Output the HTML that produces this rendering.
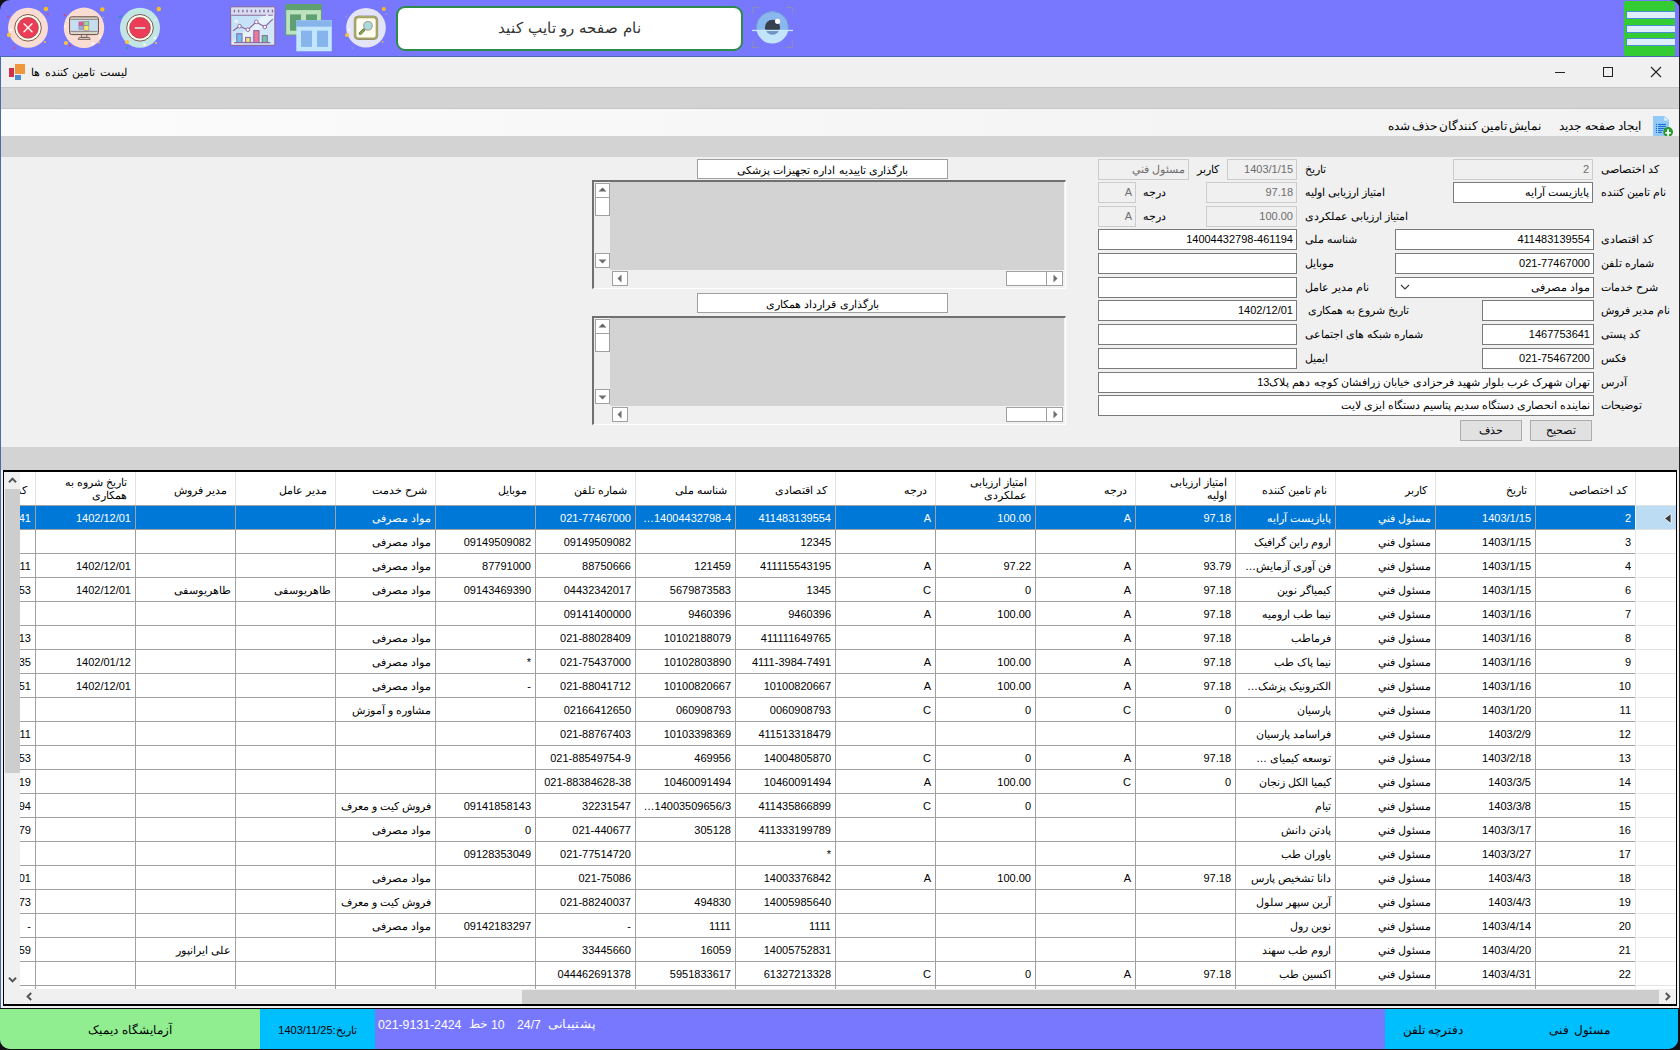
<!DOCTYPE html><html><head><meta charset="utf-8"><style>
*{box-sizing:border-box;margin:0;padding:0}
html,body{width:1680px;height:1050px;overflow:hidden;background:#7878FF;font-family:"Liberation Sans",sans-serif;font-size:11px;color:#000}
.a{position:absolute}
.t{position:absolute;white-space:nowrap;line-height:1}
.box{position:absolute;background:#fff;border:1px solid #7A7A7A;height:21px;direction:rtl;text-align:right;padding:0 3px 0 0;line-height:19px;font-size:11px;white-space:nowrap;overflow:hidden}
.dis{background:#F0F0F0;border-color:#CCCCCC;color:#6D6D6D}
.lbl{position:absolute;direction:rtl;text-align:left;white-space:nowrap;font-size:11px;line-height:14px}
.btn{position:absolute;background:#E1E1E1;border:1px solid #ADADAD;text-align:center;font-size:11px;line-height:19px}
.g{position:absolute;overflow:hidden}
.cell{position:absolute;direction:rtl;text-align:right;white-space:nowrap;font-size:11px;line-height:14px}
</style></head><body>
<div class="a" style="left:0;top:0;width:1680px;height:56px;background:#7878FF"></div>
<svg class="a" style="left:0;top:0" width="14" height="14" viewBox="0 0 14 14"><path d="M0 0 H10 A10 10 0 0 0 0 10 Z" fill="#111"/></svg>
<svg class="a" style="left:0;top:0" width="170" height="56" viewBox="0 0 170 56"><circle cx="28" cy="27.8" r="20" fill="#FADDD2"/><circle cx="28" cy="27.8" r="13.3" fill="#FFFBEA" stroke="#6A4A44" stroke-width="0.9"/><circle cx="28" cy="27.8" r="10.5" fill="#EC3C58" stroke="#6A4A44" stroke-width="0.5"/><path d="M24 23.8 L32 31.8 M32 23.8 L24 31.8" stroke="#FFFBEA" stroke-width="1.5" stroke-linecap="round"/><circle cx="45.9" cy="8.9" r="2.2" fill="#F8BE20"/><circle cx="48" cy="13.9" r="1" fill="#EC3C58"/><circle cx="8" cy="16.6" r="1" fill="#EC3C58"/><circle cx="10.9" cy="29.7" r="1.2" fill="#fff"/><circle cx="9" cy="34.9" r="2.1" fill="#F8C440"/><circle cx="12.4" cy="37.3" r="0.7" fill="#F8C440"/><circle cx="44.8" cy="42" r="1" fill="#F8C440"/><circle cx="14.4" cy="48" r="1" fill="#EC3C58"/><circle cx="44.3" cy="19.4" r="0.7" fill="#fff"/><circle cx="84" cy="27.8" r="20.2" fill="#FADDD2"/><rect x="69.6" y="16.8" width="28.8" height="17.8" rx="2" fill="#D8D4C8" stroke="#6A4A44" stroke-width="1"/><rect x="70.4" y="19.4" width="27.2" height="12" fill="#C6DEF2"/><path d="M70.4 19.4 H97.6 M70.4 31.4 H97.6" stroke="#6A4A44" stroke-width="0.6"/><rect x="81.5" y="34.6" width="5.4" height="2.8" fill="#D8D4C8" stroke="#6A4A44" stroke-width="0.7"/><path d="M78.2 39.4 L79.2 37.4 H89.2 L90.2 39.4 Z" fill="#D8D4C8" stroke="#6A4A44" stroke-width="0.8"/><g stroke="#7A6070" stroke-width="0.4"><rect x="78.9" y="21.9" width="4.6" height="3.6" fill="#E85090"/><rect x="83.9" y="21.6" width="5" height="3.9" fill="#98D898"/><rect x="78.9" y="25.8" width="4.6" height="3.6" fill="#A8A8D8"/><rect x="83.9" y="25.8" width="5" height="4.4" fill="#F8E868"/></g><circle cx="102.3" cy="9.4" r="2.2" fill="#F8BE20"/><circle cx="64.5" cy="15" r="1" fill="#EC3C58"/><circle cx="103.5" cy="17.6" r="0.6" fill="#F8BE20"/><circle cx="66" cy="43" r="2.1" fill="#F8C440"/><circle cx="70" cy="45.8" r="1" fill="#EC3C58"/><circle cx="100" cy="36.6" r="1.2" fill="#fff"/><circle cx="92.8" cy="43.5" r="1.3" fill="#fff"/><circle cx="99" cy="42.6" r="1" fill="#F8C440"/><circle cx="65.5" cy="26.5" r="0.8" fill="#fff"/><circle cx="140" cy="27.8" r="20" fill="#C2E6E4"/><circle cx="140" cy="27.8" r="13.3" fill="#FFFBEA" stroke="#6A4A44" stroke-width="0.9"/><circle cx="140" cy="27.8" r="10.5" fill="#EC3C58" stroke="#6A4A44" stroke-width="0.5"/><rect x="134.8" y="27" width="10.4" height="2" fill="#C8D2C8"/><circle cx="158.8" cy="9" r="2.2" fill="#F8BE20"/><circle cx="120" cy="16.7" r="1" fill="#10A090"/><circle cx="127.5" cy="48" r="1" fill="#10A090"/><circle cx="127" cy="42" r="2.1" fill="#F8C440"/><circle cx="156" cy="43" r="1" fill="#F8C440"/><circle cx="144.5" cy="44.5" r="1.3" fill="#fff"/><circle cx="155" cy="38" r="1.2" fill="#fff"/><circle cx="158.7" cy="17.5" r="0.6" fill="#C09080"/><circle cx="155.5" cy="19.5" r="0.7" fill="#fff"/></svg>
<svg class="a" style="left:225px;top:2px" width="55" height="48" viewBox="225 2 55 48"><defs><linearGradient id="cg" x1="0" y1="0" x2="1" y2="1"><stop offset="0" stop-color="#C6E2F8"/><stop offset="0.45" stop-color="#C6E2F8"/><stop offset="0.5" stop-color="#E6F2FC"/><stop offset="0.6" stop-color="#E6F2FC"/><stop offset="0.65" stop-color="#D2E8FA"/><stop offset="1" stop-color="#D2E8FA"/></linearGradient></defs><rect x="230.6" y="6.9" width="44.3" height="38.4" rx="1" fill="url(#cg)" stroke="#8E6BA0" stroke-width="1.3"/><rect x="231.3" y="7.6" width="43" height="7.5" fill="#D6DEF0"/><ellipse cx="234.40" cy="11" rx="0.8" ry="1.6" fill="#8E6BA0"/><ellipse cx="238.63" cy="11" rx="0.8" ry="1.6" fill="#8E6BA0"/><ellipse cx="242.86" cy="11" rx="0.8" ry="1.6" fill="#8E6BA0"/><ellipse cx="247.09" cy="11" rx="0.8" ry="1.6" fill="#8E6BA0"/><ellipse cx="251.32" cy="11" rx="0.8" ry="1.6" fill="#8E6BA0"/><ellipse cx="255.55" cy="11" rx="0.8" ry="1.6" fill="#8E6BA0"/><ellipse cx="259.78" cy="11" rx="0.8" ry="1.6" fill="#8E6BA0"/><ellipse cx="264.01" cy="11" rx="0.8" ry="1.6" fill="#8E6BA0"/><ellipse cx="268.24" cy="11" rx="0.8" ry="1.6" fill="#8E6BA0"/><ellipse cx="272.47" cy="11" rx="0.8" ry="1.6" fill="#8E6BA0"/><path d="M231.3 15.3 H266 M268.2 15.3 H272.8" stroke="#8E6BA0" stroke-width="1.1"/><path d="M233.5 30.6 L239.5 26.2 L247.9 29.7 L256.3 21.9 L264.8 27 L272.5 19.4" fill="none" stroke="#8E6BA0" stroke-width="1.2" stroke-linecap="round"/><g fill="#fff" stroke="#8E6BA0" stroke-width="1"><circle cx="239.5" cy="26.2" r="1.8"/><circle cx="247.9" cy="29.7" r="1.8"/><circle cx="256.3" cy="21.9" r="1.8"/><circle cx="264.8" cy="27" r="1.8"/></g><path d="M235.6 20.6 l0.7 -1.6 l0.7 1.6 l1.6 0.7 l-1.6 0.7 l-0.7 1.6 l-0.7 -1.6 l-1.6 -0.7 Z" fill="#FFF6F6"/><g stroke="#8E6BA0" stroke-width="1.1"><rect x="236.8" y="33.8" width="5.2" height="8.6" fill="#6CC4F4"/><rect x="245.6" y="37.5" width="4.6" height="4.9" fill="#F8E27A"/><rect x="253.8" y="30.6" width="5.2" height="11.8" fill="#F07898"/><rect x="262.3" y="35.6" width="5" height="6.8" fill="#6ACCA4"/></g><path d="M234.6 42.6 H269.8" stroke="#8E6BA0" stroke-width="1.2" stroke-linecap="round"/></svg>
<svg class="a" style="left:284px;top:4px" width="50" height="48" viewBox="0 0 50 48"><rect x="1.2" y="0" width="36.7" height="31.5" fill="#5FA072"/><rect x="2.2" y="6.1" width="34.7" height="24.4" fill="#BCE2BE"/><rect x="6" y="10.4" width="11" height="16.3" fill="#5FA072"/><rect x="22" y="10.4" width="11" height="16.3" fill="#5FA072"/><rect x="12.3" y="16.3" width="35.5" height="31" fill="#C2E6FC"/><rect x="12.3" y="16.3" width="35.5" height="6.4" fill="#88B4EC"/><rect x="17" y="26.7" width="11" height="16.2" fill="#88B4EC"/><rect x="33" y="26.7" width="11" height="16.2" fill="#88B4EC"/></svg>
<svg class="a" style="left:340px;top:2px" width="55" height="52" viewBox="340 2 55 52"><circle cx="366" cy="27.7" r="19.8" fill="#E4E4F8"/><rect x="354.3" y="16.1" width="23.4" height="23.4" rx="3.8" fill="#FFFDF0" stroke="#7E6C62" stroke-width="0.8"/><rect x="355.4" y="17.2" width="21.2" height="21.2" rx="3" fill="none" stroke="#A3A55C" stroke-width="1.9"/><line x1="360.2" y1="33.6" x2="364" y2="29.8" stroke="#5E5040" stroke-width="2.8" stroke-linecap="round"/><line x1="360.2" y1="33.6" x2="364" y2="29.8" stroke="#7CB848" stroke-width="1.6" stroke-linecap="round"/><circle cx="368" cy="25.8" r="4.3" fill="#A6DCDE" stroke="#A89C96" stroke-width="1.1"/><circle cx="383.8" cy="8.9" r="2" fill="#F8BE20"/><circle cx="347" cy="35" r="2" fill="#F8C040"/><circle cx="382.7" cy="41.8" r="0.9" fill="#F8BE20"/><circle cx="346" cy="16.5" r="0.8" fill="#A0A0D8"/><circle cx="349" cy="29.7" r="1" fill="#fff"/><circle cx="352.4" cy="48" r="0.8" fill="#A0A0D8"/><circle cx="386" cy="14" r="0.8" fill="#A0A0D8"/></svg>
<div class="a" style="left:396px;top:6px;width:347px;height:45px;background:#fff;border:2px solid #2B8C4C;border-radius:9px"></div>
<div class="t" style="left:396px;top:20px;width:347px;text-align:center;direction:rtl;font-size:15px;word-spacing:0.5px;color:#333">نام صفحه رو تایپ کنید</div>
<svg class="a" style="left:745px;top:0" width="56" height="56" viewBox="745 0 56 56"><defs><clipPath id="eyetop"><rect x="745" y="0" width="56" height="30.4"/></clipPath></defs><path d="M752.6 14 V7.5 H759 M786 7.5 H792.4 V14 M752.6 41 V47.5 H759 M786 47.5 H792.4 V41" fill="none" stroke="#8C8CB4" stroke-width="1.1"/><circle cx="772.4" cy="27.5" r="16" fill="#C2E5FC"/><g clip-path="url(#eyetop)"><circle cx="772.4" cy="27.5" r="16" fill="#8AB8EE" stroke="#6088BC" stroke-width="0.6"/></g><circle cx="772.5" cy="27.3" r="7.5" fill="#6E92C2"/><g clip-path="url(#eyetop)"><circle cx="772.5" cy="27.3" r="7.5" fill="#374150"/></g><circle cx="777.6" cy="21.3" r="2.6" fill="#fff"/><rect x="752" y="29.8" width="41" height="1.3" fill="#C8E8FC"/></svg>
<div class="a" style="left:1624px;top:1px;width:51px;height:55px;background:#33CC33;border-radius:2px"></div>
<div class="a" style="left:1626px;top:11px;width:49px;height:8px;background:#DDEEFF;border:1px solid #4A8ED0;border-right:none"></div>
<div class="a" style="left:1626px;top:25px;width:49px;height:8px;background:#DDEEFF;border:1px solid #4A8ED0;border-right:none"></div>
<div class="a" style="left:1626px;top:38px;width:49px;height:8px;background:#DDEEFF;border:1px solid #4A8ED0;border-right:none"></div>
<div class="a" style="left:1679px;top:0;width:1px;height:1050px;background:#222"></div>
<svg class="a" style="left:1666px;top:0" width="14" height="14" viewBox="0 0 14 14"><path d="M4 0 H14 V10 A10 10 0 0 0 4 0 Z" fill="#111"/></svg>
<div class="a" style="left:0;top:56px;width:1679px;height:952px;background:#F0F0F0"></div>
<div class="a" style="left:0;top:56px;width:1679px;height:1px;background:#4A6AAE"></div>
<div class="a" style="left:0;top:56px;width:1px;height:952px;background:#4A6AAE"></div>
<div class="a" style="left:1px;top:57px;width:1678px;height:30px;background:#F0F0F0"></div>
<div class="a" style="left:9px;top:68px;width:5px;height:9px;background:#D0304A"></div><div class="a" style="left:15px;top:64px;width:10px;height:10px;background:#F0963C"></div><div class="a" style="left:15px;top:75px;width:6px;height:5px;background:#4A8ED0"></div>
<div class="t" style="left:30px;top:67px;width:97px;text-align:right;direction:rtl;font-size:11px;word-spacing:1.6px;color:#000">لیست تامین کننده ها</div>
<div class="a" style="left:1555px;top:72px;width:10px;height:1px;background:#222"></div>
<div class="a" style="left:1603px;top:67px;width:10px;height:10px;border:1px solid #222"></div>
<svg class="a" style="left:1650px;top:66px" width="12" height="12" viewBox="0 0 12 12"><path d="M1 1 L11 11 M11 1 L1 11" stroke="#222" stroke-width="1.1"/></svg>
<div class="a" style="left:1px;top:87px;width:1678px;height:22px;background:#D3D3D3;border-top:1px solid #C6C6C6;border-bottom:1px solid #C6C6C6"></div>
<div class="a" style="left:1px;top:109px;width:1678px;height:27px;background:linear-gradient(90deg,#FBFBFB,#F2F2F2)"></div>
<div class="a" style="left:1px;top:136px;width:1678px;height:21px;background:#D3D3D3"></div>
<svg class="a" style="left:1648px;top:110px" width="28" height="26" viewBox="1648 110 28 26"><path d="M1653 115.9 H1664.6 L1669 120.3 V136 H1653 Z" fill="#94CAF8"/><path d="M1664.3 116.8 L1668 120.6 H1664.3 Z" fill="#E6F6FE"/><g fill="#1A6ED0"><rect x="1655.9" y="123.9" width="1.1" height="1.1"/><rect x="1655.9" y="125.9" width="1.1" height="1.1"/><rect x="1655.9" y="127.9" width="1.1" height="1.1"/><rect x="1655.9" y="129.9" width="1.1" height="1.1"/><rect x="1655.9" y="131.9" width="1.1" height="1.1"/><rect x="1658.1" y="123.9" width="7.8" height="1.1"/><rect x="1658.1" y="125.9" width="7.8" height="1.1"/><rect x="1658.1" y="127.9" width="6.7" height="1.1"/><rect x="1658.1" y="129.9" width="4.7" height="1.1"/><rect x="1658.1" y="131.9" width="3.8" height="1.1"/></g><circle cx="1668.1" cy="132" r="4.9" fill="#2A9A32"/><path d="M1668.1 129.3 V136 M1665.4 132.8 H1670.8" stroke="#fff" stroke-width="1.7"/></svg>
<div class="t" style="left:1540px;top:120px;width:101px;text-align:right;direction:rtl;font-size:12px">ایجاد صفحه جدید</div>
<div class="t" style="left:1340px;top:120px;width:201px;text-align:right;direction:rtl;font-size:12px;word-spacing:-1px">نمایش تامین کنندگان حذف شده</div>
<div class="a" style="left:1px;top:157px;width:1678px;height:290px;background:#F0F0F0"></div>
<div class="a" style="left:1px;top:447px;width:1678px;height:23px;background:#D3D3D3"></div>
<div class="lbl" style="left:1601px;top:162px">کد اختصاصی</div>
<div class="box dis" style="left:1453px;top:159px;width:140px;">2</div>
<div class="lbl" style="left:1601px;top:185px">نام تامین کننده</div>
<div class="box" style="left:1453px;top:182px;width:140px;">پایازیست آرایه</div>
<div class="lbl" style="left:1601px;top:232px">کد اقتصادی</div>
<div class="box" style="left:1395px;top:229px;width:199px;">411483139554</div>
<div class="lbl" style="left:1601px;top:256px">شماره تلفن</div>
<div class="box" style="left:1395px;top:253px;width:199px;">021-77467000</div>
<div class="lbl" style="left:1601px;top:280px">شرح خدمات</div>
<div class="box" style="left:1395px;top:277px;width:199px;">مواد مصرفی</div>
<svg class="a" style="left:1400px;top:284px" width="10" height="7" viewBox="0 0 10 7"><path d="M1 1 L5 5 L9 1" fill="none" stroke="#333" stroke-width="1.1"/></svg>
<div class="lbl" style="left:1601px;top:303px">نام مدیر فروش</div>
<div class="box" style="left:1482px;top:300px;width:112px;"></div>
<div class="lbl" style="left:1601px;top:327px">کد پستی</div>
<div class="box" style="left:1482px;top:324px;width:112px;">1467753641</div>
<div class="lbl" style="left:1601px;top:351px">فکس</div>
<div class="box" style="left:1482px;top:348px;width:112px;">021-75467200</div>
<div class="lbl" style="left:1601px;top:375px">آدرس</div>
<div class="box" style="left:1098px;top:372px;width:496px;">تهران شهرک غرب بلوار شهید فرحزادی خیابان زرافشان کوچه دهم پلاک13</div>
<div class="lbl" style="left:1601px;top:398px">توضیحات</div>
<div class="box" style="left:1098px;top:395px;width:496px;">نماینده انحصاری دستگاه سدیم پتاسیم دستگاه ایزی لایت</div>
<div class="btn" style="left:1530px;top:420px;width:62px;height:21px">تصحیح</div>
<div class="btn" style="left:1460px;top:420px;width:62px;height:21px">حذف</div>
<div class="lbl" style="left:1305px;top:162px">تاریخ</div>
<div class="box dis" style="left:1227px;top:159px;width:70px;">1403/1/15</div>
<div class="lbl" style="left:1197px;top:162px">کاربر</div>
<div class="box dis" style="left:1098px;top:159px;width:91px;">مسئول فني</div>
<div class="lbl" style="left:1305px;top:185px">امتیاز ارزیابی اولیه</div>
<div class="box dis" style="left:1206px;top:182px;width:91px;">97.18</div>
<div class="lbl" style="left:1143px;top:185px">درجه</div>
<div class="box dis" style="left:1098px;top:182px;width:38px;">A</div>
<div class="lbl" style="left:1305px;top:209px">امتیاز ارزیابی عملکردی</div>
<div class="box dis" style="left:1206px;top:206px;width:91px;">100.00</div>
<div class="lbl" style="left:1143px;top:209px">درجه</div>
<div class="box dis" style="left:1098px;top:206px;width:38px;">A</div>
<div class="lbl" style="left:1305px;top:232px">شناسه ملی</div>
<div class="box" style="left:1098px;top:229px;width:199px;">14004432798-461194</div>
<div class="lbl" style="left:1305px;top:256px">موبایل</div>
<div class="box" style="left:1098px;top:253px;width:199px;"></div>
<div class="lbl" style="left:1305px;top:280px">نام مدیر عامل</div>
<div class="box" style="left:1098px;top:277px;width:199px;"></div>
<div class="lbl" style="left:1308px;top:303px">تاریخ شروع به همکاری</div>
<div class="box" style="left:1098px;top:300px;width:199px;">1402/12/01</div>
<div class="lbl" style="left:1305px;top:327px">شماره شبکه های اجتماعی</div>
<div class="box" style="left:1098px;top:324px;width:199px;"></div>
<div class="lbl" style="left:1305px;top:351px">ایمیل</div>
<div class="box" style="left:1098px;top:348px;width:199px;"></div>
<div class="a" style="left:697px;top:159px;width:251px;height:20px;background:#fff;border:1px solid #A0A0A0"></div>
<div class="t" style="left:697px;top:165px;width:251px;text-align:center;direction:rtl;font-size:11px">بارگذاری تاییدیه اداره تجهیزات پزشکی</div>
<div class="a" style="left:592px;top:180px;width:474px;height:109px;background:#F0F0F0;border-top:2px solid #707070;border-left:2px solid #707070;border-right:1px solid #fff;border-bottom:1px solid #fff"></div>
<div class="a" style="left:610px;top:182px;width:454px;height:88px;background:#D3D3D3"></div>
<div class="a" style="left:595px;top:183px;width:15px;height:15px;background:#fff;border:1px solid #A0A0A0"></div>
<svg class="a" style="left:598px;top:187px" width="9" height="5"><path d="M0.5 4.5 L4.5 0.5 L8.5 4.5 Z" fill="#666"/></svg>
<div class="a" style="left:595px;top:197px;width:15px;height:19px;background:#fff;border:1px solid #A0A0A0"></div>
<div class="a" style="left:595px;top:253px;width:15px;height:15px;background:#fff;border:1px solid #A0A0A0"></div>
<svg class="a" style="left:598px;top:259px" width="9" height="5"><path d="M0.5 0.5 L4.5 4.5 L8.5 0.5 Z" fill="#6E6E6E"/></svg>
<div class="a" style="left:612px;top:271px;width:16px;height:15px;background:#fff;border:1px solid #A0A0A0"></div>
<svg class="a" style="left:617px;top:274px" width="5" height="9"><path d="M4.5 0.5 L0.5 4.5 L4.5 8.5 Z" fill="#6E6E6E"/></svg>
<div class="a" style="left:1006px;top:271px;width:41px;height:15px;background:#fff;border:1px solid #A0A0A0"></div>
<div class="a" style="left:1046px;top:271px;width:17px;height:15px;background:#fff;border:1px solid #A0A0A0"></div>
<svg class="a" style="left:1053px;top:274px" width="5" height="9"><path d="M0.5 0.5 L4.5 4.5 L0.5 8.5 Z" fill="#6E6E6E"/></svg>
<div class="a" style="left:697px;top:293px;width:251px;height:20px;background:#fff;border:1px solid #A0A0A0"></div>
<div class="t" style="left:697px;top:299px;width:251px;text-align:center;direction:rtl;font-size:11px">بارگذاری قرارداد همکاری</div>
<div class="a" style="left:592px;top:316px;width:474px;height:109px;background:#F0F0F0;border-top:2px solid #707070;border-left:2px solid #707070;border-right:1px solid #fff;border-bottom:1px solid #fff"></div>
<div class="a" style="left:610px;top:318px;width:454px;height:88px;background:#D3D3D3"></div>
<div class="a" style="left:595px;top:319px;width:15px;height:15px;background:#fff;border:1px solid #A0A0A0"></div>
<svg class="a" style="left:598px;top:323px" width="9" height="5"><path d="M0.5 4.5 L4.5 0.5 L8.5 4.5 Z" fill="#666"/></svg>
<div class="a" style="left:595px;top:333px;width:15px;height:19px;background:#fff;border:1px solid #A0A0A0"></div>
<div class="a" style="left:595px;top:389px;width:15px;height:15px;background:#fff;border:1px solid #A0A0A0"></div>
<svg class="a" style="left:598px;top:395px" width="9" height="5"><path d="M0.5 0.5 L4.5 4.5 L8.5 0.5 Z" fill="#6E6E6E"/></svg>
<div class="a" style="left:612px;top:407px;width:16px;height:15px;background:#fff;border:1px solid #A0A0A0"></div>
<svg class="a" style="left:617px;top:410px" width="5" height="9"><path d="M4.5 0.5 L0.5 4.5 L4.5 8.5 Z" fill="#6E6E6E"/></svg>
<div class="a" style="left:1006px;top:407px;width:41px;height:15px;background:#fff;border:1px solid #A0A0A0"></div>
<div class="a" style="left:1046px;top:407px;width:17px;height:15px;background:#fff;border:1px solid #A0A0A0"></div>
<svg class="a" style="left:1053px;top:410px" width="5" height="9"><path d="M0.5 0.5 L4.5 4.5 L0.5 8.5 Z" fill="#6E6E6E"/></svg>
<div class="a" style="left:3px;top:470px;width:1674px;height:536px;background:#fff;border:1px solid #000;border-width:2px 1px 2px 1px"></div>
<div class="g" style="left:20px;top:472px;width:1656px;height:517px">
<div class="a" style="left:0px;top:33px;width:1616px;height:1px;background:#A0A0A0"></div>
<div class="a" style="left:1616px;top:33px;width:40px;height:1px;background:#E3E3E3"></div>
<div class="a" style="left:0px;top:57px;width:1616px;height:1px;background:#A0A0A0"></div>
<div class="a" style="left:1616px;top:57px;width:40px;height:1px;background:#E3E3E3"></div>
<div class="a" style="left:0px;top:81px;width:1616px;height:1px;background:#A0A0A0"></div>
<div class="a" style="left:1616px;top:81px;width:40px;height:1px;background:#E3E3E3"></div>
<div class="a" style="left:0px;top:105px;width:1616px;height:1px;background:#A0A0A0"></div>
<div class="a" style="left:1616px;top:105px;width:40px;height:1px;background:#E3E3E3"></div>
<div class="a" style="left:0px;top:129px;width:1616px;height:1px;background:#A0A0A0"></div>
<div class="a" style="left:1616px;top:129px;width:40px;height:1px;background:#E3E3E3"></div>
<div class="a" style="left:0px;top:153px;width:1616px;height:1px;background:#A0A0A0"></div>
<div class="a" style="left:1616px;top:153px;width:40px;height:1px;background:#E3E3E3"></div>
<div class="a" style="left:0px;top:177px;width:1616px;height:1px;background:#A0A0A0"></div>
<div class="a" style="left:1616px;top:177px;width:40px;height:1px;background:#E3E3E3"></div>
<div class="a" style="left:0px;top:201px;width:1616px;height:1px;background:#A0A0A0"></div>
<div class="a" style="left:1616px;top:201px;width:40px;height:1px;background:#E3E3E3"></div>
<div class="a" style="left:0px;top:225px;width:1616px;height:1px;background:#A0A0A0"></div>
<div class="a" style="left:1616px;top:225px;width:40px;height:1px;background:#E3E3E3"></div>
<div class="a" style="left:0px;top:249px;width:1616px;height:1px;background:#A0A0A0"></div>
<div class="a" style="left:1616px;top:249px;width:40px;height:1px;background:#E3E3E3"></div>
<div class="a" style="left:0px;top:273px;width:1616px;height:1px;background:#A0A0A0"></div>
<div class="a" style="left:1616px;top:273px;width:40px;height:1px;background:#E3E3E3"></div>
<div class="a" style="left:0px;top:297px;width:1616px;height:1px;background:#A0A0A0"></div>
<div class="a" style="left:1616px;top:297px;width:40px;height:1px;background:#E3E3E3"></div>
<div class="a" style="left:0px;top:321px;width:1616px;height:1px;background:#A0A0A0"></div>
<div class="a" style="left:1616px;top:321px;width:40px;height:1px;background:#E3E3E3"></div>
<div class="a" style="left:0px;top:345px;width:1616px;height:1px;background:#A0A0A0"></div>
<div class="a" style="left:1616px;top:345px;width:40px;height:1px;background:#E3E3E3"></div>
<div class="a" style="left:0px;top:369px;width:1616px;height:1px;background:#A0A0A0"></div>
<div class="a" style="left:1616px;top:369px;width:40px;height:1px;background:#E3E3E3"></div>
<div class="a" style="left:0px;top:393px;width:1616px;height:1px;background:#A0A0A0"></div>
<div class="a" style="left:1616px;top:393px;width:40px;height:1px;background:#E3E3E3"></div>
<div class="a" style="left:0px;top:417px;width:1616px;height:1px;background:#A0A0A0"></div>
<div class="a" style="left:1616px;top:417px;width:40px;height:1px;background:#E3E3E3"></div>
<div class="a" style="left:0px;top:441px;width:1616px;height:1px;background:#A0A0A0"></div>
<div class="a" style="left:1616px;top:441px;width:40px;height:1px;background:#E3E3E3"></div>
<div class="a" style="left:0px;top:465px;width:1616px;height:1px;background:#A0A0A0"></div>
<div class="a" style="left:1616px;top:465px;width:40px;height:1px;background:#E3E3E3"></div>
<div class="a" style="left:0px;top:489px;width:1616px;height:1px;background:#A0A0A0"></div>
<div class="a" style="left:1616px;top:489px;width:40px;height:1px;background:#E3E3E3"></div>
<div class="a" style="left:0px;top:513px;width:1616px;height:1px;background:#A0A0A0"></div>
<div class="a" style="left:1616px;top:513px;width:40px;height:1px;background:#E3E3E3"></div>
<div class="a" style="left:1615px;top:33px;width:1px;height:484px;background:#E8E8E8"></div>
<div class="a" style="left:1615px;top:0px;width:1px;height:33px;background:#E3E3E3"></div>
<div class="a" style="left:1515px;top:33px;width:1px;height:484px;background:#A0A0A0"></div>
<div class="a" style="left:1515px;top:0px;width:1px;height:33px;background:#E3E3E3"></div>
<div class="a" style="left:1415px;top:33px;width:1px;height:484px;background:#A0A0A0"></div>
<div class="a" style="left:1415px;top:0px;width:1px;height:33px;background:#E3E3E3"></div>
<div class="a" style="left:1315px;top:33px;width:1px;height:484px;background:#A0A0A0"></div>
<div class="a" style="left:1315px;top:0px;width:1px;height:33px;background:#E3E3E3"></div>
<div class="a" style="left:1215px;top:33px;width:1px;height:484px;background:#A0A0A0"></div>
<div class="a" style="left:1215px;top:0px;width:1px;height:33px;background:#E3E3E3"></div>
<div class="a" style="left:1115px;top:33px;width:1px;height:484px;background:#A0A0A0"></div>
<div class="a" style="left:1115px;top:0px;width:1px;height:33px;background:#E3E3E3"></div>
<div class="a" style="left:1015px;top:33px;width:1px;height:484px;background:#A0A0A0"></div>
<div class="a" style="left:1015px;top:0px;width:1px;height:33px;background:#E3E3E3"></div>
<div class="a" style="left:915px;top:33px;width:1px;height:484px;background:#A0A0A0"></div>
<div class="a" style="left:915px;top:0px;width:1px;height:33px;background:#E3E3E3"></div>
<div class="a" style="left:815px;top:33px;width:1px;height:484px;background:#A0A0A0"></div>
<div class="a" style="left:815px;top:0px;width:1px;height:33px;background:#E3E3E3"></div>
<div class="a" style="left:715px;top:33px;width:1px;height:484px;background:#A0A0A0"></div>
<div class="a" style="left:715px;top:0px;width:1px;height:33px;background:#E3E3E3"></div>
<div class="a" style="left:615px;top:33px;width:1px;height:484px;background:#A0A0A0"></div>
<div class="a" style="left:615px;top:0px;width:1px;height:33px;background:#E3E3E3"></div>
<div class="a" style="left:515px;top:33px;width:1px;height:484px;background:#A0A0A0"></div>
<div class="a" style="left:515px;top:0px;width:1px;height:33px;background:#E3E3E3"></div>
<div class="a" style="left:415px;top:33px;width:1px;height:484px;background:#A0A0A0"></div>
<div class="a" style="left:415px;top:0px;width:1px;height:33px;background:#E3E3E3"></div>
<div class="a" style="left:315px;top:33px;width:1px;height:484px;background:#A0A0A0"></div>
<div class="a" style="left:315px;top:0px;width:1px;height:33px;background:#E3E3E3"></div>
<div class="a" style="left:215px;top:33px;width:1px;height:484px;background:#A0A0A0"></div>
<div class="a" style="left:215px;top:0px;width:1px;height:33px;background:#E3E3E3"></div>
<div class="a" style="left:115px;top:33px;width:1px;height:484px;background:#A0A0A0"></div>
<div class="a" style="left:115px;top:0px;width:1px;height:33px;background:#E3E3E3"></div>
<div class="a" style="left:15px;top:33px;width:1px;height:484px;background:#A0A0A0"></div>
<div class="a" style="left:15px;top:0px;width:1px;height:33px;background:#E3E3E3"></div>
<div class="a" style="left:0px;top:34px;width:1615px;height:23px;background:#0078D7"></div>
<div class="a" style="left:1515px;top:34px;width:1px;height:23px;background:#A0A0A0"></div>
<div class="a" style="left:1415px;top:34px;width:1px;height:23px;background:#A0A0A0"></div>
<div class="a" style="left:1315px;top:34px;width:1px;height:23px;background:#A0A0A0"></div>
<div class="a" style="left:1215px;top:34px;width:1px;height:23px;background:#A0A0A0"></div>
<div class="a" style="left:1115px;top:34px;width:1px;height:23px;background:#A0A0A0"></div>
<div class="a" style="left:1015px;top:34px;width:1px;height:23px;background:#A0A0A0"></div>
<div class="a" style="left:915px;top:34px;width:1px;height:23px;background:#A0A0A0"></div>
<div class="a" style="left:815px;top:34px;width:1px;height:23px;background:#A0A0A0"></div>
<div class="a" style="left:715px;top:34px;width:1px;height:23px;background:#A0A0A0"></div>
<div class="a" style="left:615px;top:34px;width:1px;height:23px;background:#A0A0A0"></div>
<div class="a" style="left:515px;top:34px;width:1px;height:23px;background:#A0A0A0"></div>
<div class="a" style="left:415px;top:34px;width:1px;height:23px;background:#A0A0A0"></div>
<div class="a" style="left:315px;top:34px;width:1px;height:23px;background:#A0A0A0"></div>
<div class="a" style="left:215px;top:34px;width:1px;height:23px;background:#A0A0A0"></div>
<div class="a" style="left:115px;top:34px;width:1px;height:23px;background:#A0A0A0"></div>
<div class="a" style="left:15px;top:34px;width:1px;height:23px;background:#A0A0A0"></div>
<div class="a" style="left:1615px;top:34px;width:1px;height:23px;background:#F4F4F4"></div>
<div class="a" style="left:1616px;top:34px;width:40px;height:23px;background:#BCDCF4"></div>
<svg class="a" style="left:1643px;top:40px" width="10" height="13"><path d="M8 1.5 L1.5 6.5 L8 11.5 Z" fill="#3C3C3C" stroke="#fff" stroke-width="0.8"/></svg>
<div class="cell" style="left:1517px;top:12px;width:90px;line-height:13px">کد اختصاصی</div>
<div class="cell" style="left:1417px;top:12px;width:90px;line-height:13px">تاریخ</div>
<div class="cell" style="left:1317px;top:12px;width:90px;line-height:13px">کاربر</div>
<div class="cell" style="left:1217px;top:12px;width:90px;line-height:13px">نام تامین کننده</div>
<div class="cell" style="left:1117px;top:4px;width:90px;line-height:13px">امتیاز ارزیابی<br>اولیه</div>
<div class="cell" style="left:1017px;top:12px;width:90px;line-height:13px">درجه</div>
<div class="cell" style="left:917px;top:4px;width:90px;line-height:13px">امتیاز ارزیابی<br>عملکردی</div>
<div class="cell" style="left:817px;top:12px;width:90px;line-height:13px">درجه</div>
<div class="cell" style="left:717px;top:12px;width:90px;line-height:13px">کد اقتصادی</div>
<div class="cell" style="left:617px;top:12px;width:90px;line-height:13px">شناسه ملی</div>
<div class="cell" style="left:517px;top:12px;width:90px;line-height:13px">شماره تلفن</div>
<div class="cell" style="left:417px;top:12px;width:90px;line-height:13px">موبایل</div>
<div class="cell" style="left:317px;top:12px;width:90px;line-height:13px">شرح خدمت</div>
<div class="cell" style="left:217px;top:12px;width:90px;line-height:13px">مدیر عامل</div>
<div class="cell" style="left:117px;top:12px;width:90px;line-height:13px">مدیر فروش</div>
<div class="cell" style="left:17px;top:4px;width:90px;line-height:13px">تاریخ شروه به<br>همکاری</div>
<div class="cell" style="left:-83px;top:12px;width:90px;line-height:13px">کد پستی</div>
<div class="cell" style="left:1517px;top:39px;width:94px;color:#fff">2</div>
<div class="cell" style="left:1417px;top:39px;width:94px;color:#fff">1403/1/15</div>
<div class="cell" style="left:1317px;top:39px;width:94px;color:#fff">مسئول فني</div>
<div class="cell" style="left:1217px;top:39px;width:94px;color:#fff">پایازیست آرایه</div>
<div class="cell" style="left:1117px;top:39px;width:94px;color:#fff">97.18</div>
<div class="cell" style="left:1017px;top:39px;width:94px;color:#fff">A</div>
<div class="cell" style="left:917px;top:39px;width:94px;color:#fff">100.00</div>
<div class="cell" style="left:817px;top:39px;width:94px;color:#fff">A</div>
<div class="cell" style="left:717px;top:39px;width:94px;color:#fff">411483139554</div>
<div class="cell" style="left:617px;top:39px;width:94px;color:#fff">14004432798-4…</div>
<div class="cell" style="left:517px;top:39px;width:94px;color:#fff">021-77467000</div>
<div class="cell" style="left:317px;top:39px;width:94px;color:#fff">مواد مصرفی</div>
<div class="cell" style="left:17px;top:39px;width:94px;color:#fff">1402/12/01</div>
<div class="cell" style="left:-83px;top:39px;width:94px;color:#fff">1467753641</div>
<div class="cell" style="left:1517px;top:63px;width:94px;color:#000">3</div>
<div class="cell" style="left:1417px;top:63px;width:94px;color:#000">1403/1/15</div>
<div class="cell" style="left:1317px;top:63px;width:94px;color:#000">مسئول فني</div>
<div class="cell" style="left:1217px;top:63px;width:94px;color:#000">اروم راین گرافیک</div>
<div class="cell" style="left:717px;top:63px;width:94px;color:#000">12345</div>
<div class="cell" style="left:517px;top:63px;width:94px;color:#000">09149509082</div>
<div class="cell" style="left:417px;top:63px;width:94px;color:#000">09149509082</div>
<div class="cell" style="left:317px;top:63px;width:94px;color:#000">مواد مصرفی</div>
<div class="cell" style="left:1517px;top:87px;width:94px;color:#000">4</div>
<div class="cell" style="left:1417px;top:87px;width:94px;color:#000">1403/1/15</div>
<div class="cell" style="left:1317px;top:87px;width:94px;color:#000">مسئول فني</div>
<div class="cell" style="left:1217px;top:87px;width:94px;color:#000">فن آوری آزمایش…</div>
<div class="cell" style="left:1117px;top:87px;width:94px;color:#000">93.79</div>
<div class="cell" style="left:1017px;top:87px;width:94px;color:#000">A</div>
<div class="cell" style="left:917px;top:87px;width:94px;color:#000">97.22</div>
<div class="cell" style="left:817px;top:87px;width:94px;color:#000">A</div>
<div class="cell" style="left:717px;top:87px;width:94px;color:#000">411115543195</div>
<div class="cell" style="left:617px;top:87px;width:94px;color:#000">121459</div>
<div class="cell" style="left:517px;top:87px;width:94px;color:#000">88750666</div>
<div class="cell" style="left:417px;top:87px;width:94px;color:#000">87791000</div>
<div class="cell" style="left:317px;top:87px;width:94px;color:#000">مواد مصرفی</div>
<div class="cell" style="left:17px;top:87px;width:94px;color:#000">1402/12/01</div>
<div class="cell" style="left:-83px;top:87px;width:94px;color:#000">1467753611</div>
<div class="cell" style="left:1517px;top:111px;width:94px;color:#000">6</div>
<div class="cell" style="left:1417px;top:111px;width:94px;color:#000">1403/1/15</div>
<div class="cell" style="left:1317px;top:111px;width:94px;color:#000">مسئول فني</div>
<div class="cell" style="left:1217px;top:111px;width:94px;color:#000">کیمیاگر نوین</div>
<div class="cell" style="left:1117px;top:111px;width:94px;color:#000">97.18</div>
<div class="cell" style="left:1017px;top:111px;width:94px;color:#000">A</div>
<div class="cell" style="left:917px;top:111px;width:94px;color:#000">0</div>
<div class="cell" style="left:817px;top:111px;width:94px;color:#000">C</div>
<div class="cell" style="left:717px;top:111px;width:94px;color:#000">1345</div>
<div class="cell" style="left:617px;top:111px;width:94px;color:#000">5679873583</div>
<div class="cell" style="left:517px;top:111px;width:94px;color:#000">04432342017</div>
<div class="cell" style="left:417px;top:111px;width:94px;color:#000">09143469390</div>
<div class="cell" style="left:317px;top:111px;width:94px;color:#000">مواد مصرفی</div>
<div class="cell" style="left:217px;top:111px;width:94px;color:#000">طاهریوسفی</div>
<div class="cell" style="left:117px;top:111px;width:94px;color:#000">طاهریوسفی</div>
<div class="cell" style="left:17px;top:111px;width:94px;color:#000">1402/12/01</div>
<div class="cell" style="left:-83px;top:111px;width:94px;color:#000">1467753653</div>
<div class="cell" style="left:1517px;top:135px;width:94px;color:#000">7</div>
<div class="cell" style="left:1417px;top:135px;width:94px;color:#000">1403/1/16</div>
<div class="cell" style="left:1317px;top:135px;width:94px;color:#000">مسئول فني</div>
<div class="cell" style="left:1217px;top:135px;width:94px;color:#000">نیما طب ارومیه</div>
<div class="cell" style="left:1117px;top:135px;width:94px;color:#000">97.18</div>
<div class="cell" style="left:1017px;top:135px;width:94px;color:#000">A</div>
<div class="cell" style="left:917px;top:135px;width:94px;color:#000">100.00</div>
<div class="cell" style="left:817px;top:135px;width:94px;color:#000">A</div>
<div class="cell" style="left:717px;top:135px;width:94px;color:#000">9460396</div>
<div class="cell" style="left:617px;top:135px;width:94px;color:#000">9460396</div>
<div class="cell" style="left:517px;top:135px;width:94px;color:#000">09141400000</div>
<div class="cell" style="left:1517px;top:159px;width:94px;color:#000">8</div>
<div class="cell" style="left:1417px;top:159px;width:94px;color:#000">1403/1/16</div>
<div class="cell" style="left:1317px;top:159px;width:94px;color:#000">مسئول فني</div>
<div class="cell" style="left:1217px;top:159px;width:94px;color:#000">فرماطب</div>
<div class="cell" style="left:1117px;top:159px;width:94px;color:#000">97.18</div>
<div class="cell" style="left:1017px;top:159px;width:94px;color:#000">A</div>
<div class="cell" style="left:717px;top:159px;width:94px;color:#000">411111649765</div>
<div class="cell" style="left:617px;top:159px;width:94px;color:#000">10102188079</div>
<div class="cell" style="left:517px;top:159px;width:94px;color:#000">021-88028409</div>
<div class="cell" style="left:317px;top:159px;width:94px;color:#000">مواد مصرفی</div>
<div class="cell" style="left:-83px;top:159px;width:94px;color:#000">1467753613</div>
<div class="cell" style="left:1517px;top:183px;width:94px;color:#000">9</div>
<div class="cell" style="left:1417px;top:183px;width:94px;color:#000">1403/1/16</div>
<div class="cell" style="left:1317px;top:183px;width:94px;color:#000">مسئول فني</div>
<div class="cell" style="left:1217px;top:183px;width:94px;color:#000">نیما پاک طب</div>
<div class="cell" style="left:1117px;top:183px;width:94px;color:#000">97.18</div>
<div class="cell" style="left:1017px;top:183px;width:94px;color:#000">A</div>
<div class="cell" style="left:917px;top:183px;width:94px;color:#000">100.00</div>
<div class="cell" style="left:817px;top:183px;width:94px;color:#000">A</div>
<div class="cell" style="left:717px;top:183px;width:94px;color:#000">4111-3984-7491</div>
<div class="cell" style="left:617px;top:183px;width:94px;color:#000">10102803890</div>
<div class="cell" style="left:517px;top:183px;width:94px;color:#000">021-75437000</div>
<div class="cell" style="left:417px;top:183px;width:94px;color:#000">*</div>
<div class="cell" style="left:317px;top:183px;width:94px;color:#000">مواد مصرفی</div>
<div class="cell" style="left:17px;top:183px;width:94px;color:#000">1402/01/12</div>
<div class="cell" style="left:-83px;top:183px;width:94px;color:#000">1467753635</div>
<div class="cell" style="left:1517px;top:207px;width:94px;color:#000">10</div>
<div class="cell" style="left:1417px;top:207px;width:94px;color:#000">1403/1/16</div>
<div class="cell" style="left:1317px;top:207px;width:94px;color:#000">مسئول فني</div>
<div class="cell" style="left:1217px;top:207px;width:94px;color:#000">الکترونیک پزشک…</div>
<div class="cell" style="left:1117px;top:207px;width:94px;color:#000">97.18</div>
<div class="cell" style="left:1017px;top:207px;width:94px;color:#000">A</div>
<div class="cell" style="left:917px;top:207px;width:94px;color:#000">100.00</div>
<div class="cell" style="left:817px;top:207px;width:94px;color:#000">A</div>
<div class="cell" style="left:717px;top:207px;width:94px;color:#000">10100820667</div>
<div class="cell" style="left:617px;top:207px;width:94px;color:#000">10100820667</div>
<div class="cell" style="left:517px;top:207px;width:94px;color:#000">021-88041712</div>
<div class="cell" style="left:417px;top:207px;width:94px;color:#000">-</div>
<div class="cell" style="left:317px;top:207px;width:94px;color:#000">مواد مصرفی</div>
<div class="cell" style="left:17px;top:207px;width:94px;color:#000">1402/12/01</div>
<div class="cell" style="left:-83px;top:207px;width:94px;color:#000">1467753651</div>
<div class="cell" style="left:1517px;top:231px;width:94px;color:#000">11</div>
<div class="cell" style="left:1417px;top:231px;width:94px;color:#000">1403/1/20</div>
<div class="cell" style="left:1317px;top:231px;width:94px;color:#000">مسئول فني</div>
<div class="cell" style="left:1217px;top:231px;width:94px;color:#000">پارسیان</div>
<div class="cell" style="left:1117px;top:231px;width:94px;color:#000">0</div>
<div class="cell" style="left:1017px;top:231px;width:94px;color:#000">C</div>
<div class="cell" style="left:917px;top:231px;width:94px;color:#000">0</div>
<div class="cell" style="left:817px;top:231px;width:94px;color:#000">C</div>
<div class="cell" style="left:717px;top:231px;width:94px;color:#000">0060908793</div>
<div class="cell" style="left:617px;top:231px;width:94px;color:#000">060908793</div>
<div class="cell" style="left:517px;top:231px;width:94px;color:#000">02166412650</div>
<div class="cell" style="left:317px;top:231px;width:94px;color:#000">مشاوره و آموزش</div>
<div class="cell" style="left:1517px;top:255px;width:94px;color:#000">12</div>
<div class="cell" style="left:1417px;top:255px;width:94px;color:#000">1403/2/9</div>
<div class="cell" style="left:1317px;top:255px;width:94px;color:#000">مسئول فني</div>
<div class="cell" style="left:1217px;top:255px;width:94px;color:#000">فراسامد پارسیان</div>
<div class="cell" style="left:717px;top:255px;width:94px;color:#000">411513318479</div>
<div class="cell" style="left:617px;top:255px;width:94px;color:#000">10103398369</div>
<div class="cell" style="left:517px;top:255px;width:94px;color:#000">021-88767403</div>
<div class="cell" style="left:-83px;top:255px;width:94px;color:#000">1467753611</div>
<div class="cell" style="left:1517px;top:279px;width:94px;color:#000">13</div>
<div class="cell" style="left:1417px;top:279px;width:94px;color:#000">1403/2/18</div>
<div class="cell" style="left:1317px;top:279px;width:94px;color:#000">مسئول فني</div>
<div class="cell" style="left:1217px;top:279px;width:94px;color:#000">توسعه کیمیای …</div>
<div class="cell" style="left:1117px;top:279px;width:94px;color:#000">97.18</div>
<div class="cell" style="left:1017px;top:279px;width:94px;color:#000">A</div>
<div class="cell" style="left:917px;top:279px;width:94px;color:#000">0</div>
<div class="cell" style="left:817px;top:279px;width:94px;color:#000">C</div>
<div class="cell" style="left:717px;top:279px;width:94px;color:#000">14004805870</div>
<div class="cell" style="left:617px;top:279px;width:94px;color:#000">469956</div>
<div class="cell" style="left:517px;top:279px;width:94px;color:#000">021-88549754-9</div>
<div class="cell" style="left:-83px;top:279px;width:94px;color:#000">1467753653</div>
<div class="cell" style="left:1517px;top:303px;width:94px;color:#000">14</div>
<div class="cell" style="left:1417px;top:303px;width:94px;color:#000">1403/3/5</div>
<div class="cell" style="left:1317px;top:303px;width:94px;color:#000">مسئول فني</div>
<div class="cell" style="left:1217px;top:303px;width:94px;color:#000">کیمیا الکل زنجان</div>
<div class="cell" style="left:1117px;top:303px;width:94px;color:#000">0</div>
<div class="cell" style="left:1017px;top:303px;width:94px;color:#000">C</div>
<div class="cell" style="left:917px;top:303px;width:94px;color:#000">100.00</div>
<div class="cell" style="left:817px;top:303px;width:94px;color:#000">A</div>
<div class="cell" style="left:717px;top:303px;width:94px;color:#000">10460091494</div>
<div class="cell" style="left:617px;top:303px;width:94px;color:#000">10460091494</div>
<div class="cell" style="left:517px;top:303px;width:94px;color:#000">021-88384628-38</div>
<div class="cell" style="left:-83px;top:303px;width:94px;color:#000">1467753619</div>
<div class="cell" style="left:1517px;top:327px;width:94px;color:#000">15</div>
<div class="cell" style="left:1417px;top:327px;width:94px;color:#000">1403/3/8</div>
<div class="cell" style="left:1317px;top:327px;width:94px;color:#000">مسئول فني</div>
<div class="cell" style="left:1217px;top:327px;width:94px;color:#000">تیام</div>
<div class="cell" style="left:917px;top:327px;width:94px;color:#000">0</div>
<div class="cell" style="left:817px;top:327px;width:94px;color:#000">C</div>
<div class="cell" style="left:717px;top:327px;width:94px;color:#000">411435866899</div>
<div class="cell" style="left:617px;top:327px;width:94px;color:#000">14003509656/3…</div>
<div class="cell" style="left:517px;top:327px;width:94px;color:#000">32231547</div>
<div class="cell" style="left:417px;top:327px;width:94px;color:#000">09141858143</div>
<div class="cell" style="left:317px;top:327px;width:94px;color:#000">فروش کیت و معرف</div>
<div class="cell" style="left:-83px;top:327px;width:94px;color:#000">1467753694</div>
<div class="cell" style="left:1517px;top:351px;width:94px;color:#000">16</div>
<div class="cell" style="left:1417px;top:351px;width:94px;color:#000">1403/3/17</div>
<div class="cell" style="left:1317px;top:351px;width:94px;color:#000">مسئول فني</div>
<div class="cell" style="left:1217px;top:351px;width:94px;color:#000">پادتن دانش</div>
<div class="cell" style="left:717px;top:351px;width:94px;color:#000">411333199789</div>
<div class="cell" style="left:617px;top:351px;width:94px;color:#000">305128</div>
<div class="cell" style="left:517px;top:351px;width:94px;color:#000">021-440677</div>
<div class="cell" style="left:417px;top:351px;width:94px;color:#000">0</div>
<div class="cell" style="left:317px;top:351px;width:94px;color:#000">مواد مصرفی</div>
<div class="cell" style="left:-83px;top:351px;width:94px;color:#000">1467753679</div>
<div class="cell" style="left:1517px;top:375px;width:94px;color:#000">17</div>
<div class="cell" style="left:1417px;top:375px;width:94px;color:#000">1403/3/27</div>
<div class="cell" style="left:1317px;top:375px;width:94px;color:#000">مسئول فني</div>
<div class="cell" style="left:1217px;top:375px;width:94px;color:#000">یاوران طب</div>
<div class="cell" style="left:717px;top:375px;width:94px;color:#000">*</div>
<div class="cell" style="left:517px;top:375px;width:94px;color:#000">021-77514720</div>
<div class="cell" style="left:417px;top:375px;width:94px;color:#000">09128353049</div>
<div class="cell" style="left:1517px;top:399px;width:94px;color:#000">18</div>
<div class="cell" style="left:1417px;top:399px;width:94px;color:#000">1403/4/3</div>
<div class="cell" style="left:1317px;top:399px;width:94px;color:#000">مسئول فني</div>
<div class="cell" style="left:1217px;top:399px;width:94px;color:#000">دانا تشخیص پارس</div>
<div class="cell" style="left:1117px;top:399px;width:94px;color:#000">97.18</div>
<div class="cell" style="left:1017px;top:399px;width:94px;color:#000">A</div>
<div class="cell" style="left:917px;top:399px;width:94px;color:#000">100.00</div>
<div class="cell" style="left:817px;top:399px;width:94px;color:#000">A</div>
<div class="cell" style="left:717px;top:399px;width:94px;color:#000">14003376842</div>
<div class="cell" style="left:517px;top:399px;width:94px;color:#000">021-75086</div>
<div class="cell" style="left:317px;top:399px;width:94px;color:#000">مواد مصرفی</div>
<div class="cell" style="left:-83px;top:399px;width:94px;color:#000">1467753601</div>
<div class="cell" style="left:1517px;top:423px;width:94px;color:#000">19</div>
<div class="cell" style="left:1417px;top:423px;width:94px;color:#000">1403/4/3</div>
<div class="cell" style="left:1317px;top:423px;width:94px;color:#000">مسئول فني</div>
<div class="cell" style="left:1217px;top:423px;width:94px;color:#000">آرین سپهر سلول</div>
<div class="cell" style="left:717px;top:423px;width:94px;color:#000">14005985640</div>
<div class="cell" style="left:617px;top:423px;width:94px;color:#000">494830</div>
<div class="cell" style="left:517px;top:423px;width:94px;color:#000">021-88240037</div>
<div class="cell" style="left:317px;top:423px;width:94px;color:#000">فروش کیت و معرف</div>
<div class="cell" style="left:-83px;top:423px;width:94px;color:#000">1467753673</div>
<div class="cell" style="left:1517px;top:447px;width:94px;color:#000">20</div>
<div class="cell" style="left:1417px;top:447px;width:94px;color:#000">1403/4/14</div>
<div class="cell" style="left:1317px;top:447px;width:94px;color:#000">مسئول فني</div>
<div class="cell" style="left:1217px;top:447px;width:94px;color:#000">نوین رول</div>
<div class="cell" style="left:717px;top:447px;width:94px;color:#000">1111</div>
<div class="cell" style="left:617px;top:447px;width:94px;color:#000">1111</div>
<div class="cell" style="left:517px;top:447px;width:94px;color:#000">-</div>
<div class="cell" style="left:417px;top:447px;width:94px;color:#000">09142183297</div>
<div class="cell" style="left:317px;top:447px;width:94px;color:#000">مواد مصرفی</div>
<div class="cell" style="left:-83px;top:447px;width:94px;color:#000">-</div>
<div class="cell" style="left:1517px;top:471px;width:94px;color:#000">21</div>
<div class="cell" style="left:1417px;top:471px;width:94px;color:#000">1403/4/20</div>
<div class="cell" style="left:1317px;top:471px;width:94px;color:#000">مسئول فني</div>
<div class="cell" style="left:1217px;top:471px;width:94px;color:#000">اروم طب سهند</div>
<div class="cell" style="left:717px;top:471px;width:94px;color:#000">14005752831</div>
<div class="cell" style="left:617px;top:471px;width:94px;color:#000">16059</div>
<div class="cell" style="left:517px;top:471px;width:94px;color:#000">33445660</div>
<div class="cell" style="left:117px;top:471px;width:94px;color:#000">علی ایرانپور</div>
<div class="cell" style="left:-83px;top:471px;width:94px;color:#000">1467753659</div>
<div class="cell" style="left:1517px;top:495px;width:94px;color:#000">22</div>
<div class="cell" style="left:1417px;top:495px;width:94px;color:#000">1403/4/31</div>
<div class="cell" style="left:1317px;top:495px;width:94px;color:#000">مسئول فني</div>
<div class="cell" style="left:1217px;top:495px;width:94px;color:#000">اکسین طب</div>
<div class="cell" style="left:1117px;top:495px;width:94px;color:#000">97.18</div>
<div class="cell" style="left:1017px;top:495px;width:94px;color:#000">A</div>
<div class="cell" style="left:917px;top:495px;width:94px;color:#000">0</div>
<div class="cell" style="left:817px;top:495px;width:94px;color:#000">C</div>
<div class="cell" style="left:717px;top:495px;width:94px;color:#000">61327213328</div>
<div class="cell" style="left:617px;top:495px;width:94px;color:#000">5951833617</div>
<div class="cell" style="left:517px;top:495px;width:94px;color:#000">044462691378</div>
</div>
<div class="a" style="left:4px;top:472px;width:16px;height:517px;background:#F0F0F0"></div>
<svg class="a" style="left:8px;top:477px" width="9" height="6"><path d="M1 5.2 L4.5 1.6 L8 5.2" fill="none" stroke="#555" stroke-width="2"/></svg>
<div class="a" style="left:5px;top:489px;width:15px;height:284px;background:#CDCDCD"></div>
<svg class="a" style="left:8px;top:977px" width="9" height="6"><path d="M1 0.8 L4.5 4.4 L8 0.8" fill="none" stroke="#555" stroke-width="2"/></svg>
<div class="a" style="left:4px;top:989px;width:1672px;height:15px;background:#F0F0F0"></div>
<div class="a" style="left:522px;top:990px;width:1137px;height:14px;background:#CDCDCD"></div>
<svg class="a" style="left:26px;top:992px" width="6" height="9"><path d="M5.2 1 L1.6 4.5 L5.2 8" fill="none" stroke="#555" stroke-width="2"/></svg>
<svg class="a" style="left:1665px;top:992px" width="6" height="9"><path d="M0.8 1 L4.4 4.5 L0.8 8" fill="none" stroke="#555" stroke-width="2"/></svg>
<div class="a" style="left:1px;top:1006px;width:1678px;height:2px;background:#F0F0F0"></div>
<div class="a" style="left:0;top:1008px;width:1679px;height:1px;background:#5A78B4"></div>
<div class="a" style="left:0;top:1008px;width:1680px;height:42px;background:#111"></div>
<div class="a" style="left:0;top:1009px;width:1678px;height:40px;background:#7878FF;border-radius:0 0 10px 10px;overflow:hidden"><div class="a" style="left:0;top:0;width:260px;height:40px;background:#90EE90"></div><div class="a" style="left:260px;top:0;width:115px;height:40px;background:#00BFFF"></div><div class="a" style="left:1385px;top:0;width:293px;height:40px;background:#00BFFF"></div></div>
<div class="t" style="left:0;top:1024px;width:260px;text-align:center;direction:rtl;font-size:12px">آزمایشگاه دیمیک</div>
<div class="t" style="left:260px;top:1025px;width:115px;text-align:center;direction:rtl;font-size:11px">تاریخ:1403/11/25</div>
<div class="t" style="left:378px;top:1019px;font-size:12.3px;color:#fff">021-9131-2424</div>
<div class="t" style="left:470px;top:1018px;width:17px;direction:rtl;text-align:right;font-size:12px;color:#fff">خط</div>
<div class="t" style="left:491px;top:1019px;font-size:12.3px;color:#fff">10</div>
<div class="t" style="left:517px;top:1019px;font-size:12.3px;color:#fff">24/7</div>
<div class="t" style="left:540px;top:1018px;width:55px;direction:rtl;text-align:right;font-size:12px;color:#fff;transform:scaleX(1.09);transform-origin:100% 50%">پشتیبانی</div>
<div class="t" style="left:1400px;top:1024px;width:63px;text-align:right;direction:rtl;font-size:12px">دفترچه تلفن</div>
<div class="t" style="left:1540px;top:1024px;width:70px;text-align:right;direction:rtl;font-size:12px;word-spacing:1.5px">مسئول فنی</div>
</body></html>
